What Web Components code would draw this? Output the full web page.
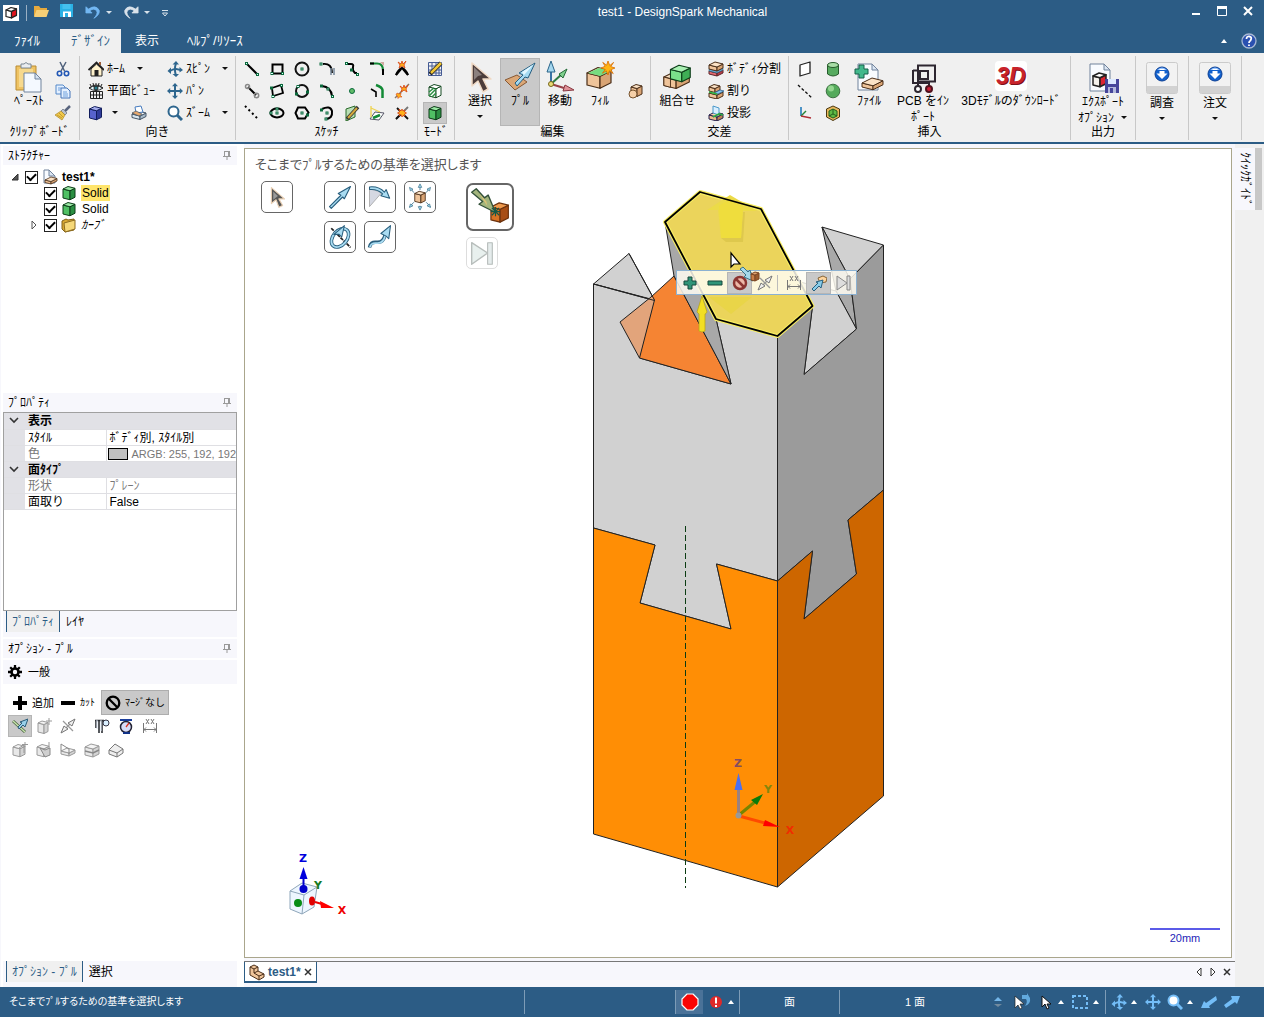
<!DOCTYPE html>
<html lang="ja">
<head>
<meta charset="utf-8">
<title>test1 - DesignSpark Mechanical</title>
<style>
html,body{height:100%;margin:0}
body{font:12px/16px "Liberation Sans","Noto Sans CJK JP",sans-serif;color:#000;background:#f7f7fc;
--blue:#2c5c85;--face:#f0f0f0;--pale:#f7f7fc;--sep:#c8c8c8}
</style>
</head>
<body>
<ds-app></ds-app>
<script>
const pts=a=>a.map(p=>p.join()).join(' ');
const poly=(a,f,s='#333',w=1)=>`<polygon points="${pts(a)}" fill="${f}" stroke="${s}" stroke-width="${w}" stroke-linejoin="round"/>`;
/* A box seen from above: front face, right side and top */
const box=(x,y,w,h,d,f,r,t,s='#333',k=1)=>{const a=w*.25,b=d*.5;return poly([[x,y],[x+w,y+a],[x+w,y+a+h],[x,y+h]],f,s,k)
+poly([[x+w,y+a],[x+w+d,y+a-b],[x+w+d,y+a-b+h],[x+w,y+a+h]],r,s,k)+poly([[x,y],[x+d,y-b],[x+w+d,y+a-b],[x+w,y+a]],t,s,k)};
const ln=(d,c='#000',w=1,e='')=>`<path d="${d}" fill="none" stroke="${c}" stroke-width="${w}" ${e}/>`;
const fl=(d,f,s='none',w=1)=>`<path d="${d}" fill="${f}" stroke="${s}" stroke-width="${w}" stroke-linejoin="round"/>`;
const dot=(...a)=>a.map(([x,y])=>`<rect x="${x-1}" y="${y-1}" width="2" height="2" fill="#dff" stroke="#0a6a3c"/>`).join('');
const cir=(x,y,r,f,s='none',w=1)=>`<circle cx="${x}" cy="${y}" r="${r}" fill="${f}" stroke="${s}" stroke-width="${w}"/>`;
const G=['#4fc064','#2b8f42','#9be8a4','#0c3d18'],B=['#efc49a','#d9a474','#fbe2c6','#4a2e18'],Y=['#e8e8e8','#d4d4d4','#f4f4f4','#9a9a9a'];
const bx=(x,y,w,h,d,c,k=1)=>box(x,y,w,h,d,c[0],c[1],c[2],c[3],k);
const star=(x,y,r)=>fl(`M${x} ${y-r}L${x+r*.25} ${y-r*.35}L${x+r*.8} ${y-r*.8}L${x+r*.4} ${y-r*.2}L${x+r} ${y}L${x+r*.4} ${y+r*.25}L${x+r*.75} ${y+r*.8}L${x+r*.2} ${y+r*.4}L${x} ${y+r}L${x-r*.25} ${y+r*.4}L${x-r*.8} ${y+r*.75}L${x-r*.4} ${y+r*.2}L${x-r} ${y}L${x-r*.4} ${y-r*.25}L${x-r*.75} ${y-r*.8}L${x-r*.2} ${y-r*.4}Z`,'#ffb414','#d96c00',.8);
const spark=(x,y)=>fl(`M${x-4} ${y-3}L${x-1} ${y-1}L${x} ${y-4}L${x+1} ${y-1}L${x+4} ${y-4}L${x+2} ${y}L${x+3} ${y+3}L${x} ${y+1}L${x-3} ${y+3}L${x-2} ${y}Z`,'#ffb21a','#d84315',.8);
const sheet=(x,y,w,h)=>fl(`M${x} ${y}h${w-6}l6 6v${h-6}h${-w}z`,'#f8fbff','#71839c')+fl(`M${x+w-6} ${y}v6h6z`,'#dbe6f3','#71839c');
const arrow4=(c)=>fl('M8 0l3 3.2H9V7h3.800V5L16 8l-3.200 3V9H9v3.800h2L8 16l-3-3.200h2V9H3.200v2L0 8l3.200-3v2H7V3.200H5z',c);
const spin=(c)=>fl('M9 0l3 3.500H9.700Q9 5 9 7l3.500.8V6l3.500 3-3.500 2.500V9.700L9 9q0 2.500.6 4H12l-3 3-3.500-3h2Q7 11 7 9.200Q5 9.500 4 10.500V13L.5 10 4 6.500v2Q5.500 7.500 7 7.300Q7 5 7.700 3.500H5.500z',c);
const lens=(c,f)=>ln('M10 10l5 5',c,3)+cir(6.5,6.5,5,f,c,2);
const I={
app:[16,`<rect width="16" height="16" fill="#fff"/>`+box(3,5,5.5,6.500,5,'#fff','#e0131d','#fff','#222',1.200)],
open:[16,fl('M1 3h5l1.500 2H14v8H1z','#e5a93d')+fl('M3.500 7H16l-2.500 7H1z','#f7cf76')],
save:[16,fl('M1 1h13v13H1z','#2ab1e5')+fl('M3.500 1h8v5h-8z','#44c0ee')+fl('M4 8.500h8V14H4z','#fff')+fl('M6 10h3v4H6z','#2ab1e5')],
undo:[18,fl('M1 2v7h7L5.500 6.500Q10 3 13 6.500Q15 10 10 15Q17 11 16 6Q12-1 4 4.500z','#72b7f2','#72b7f2',.8)],
redo:[18,fl('M17 2v7h-7l2.500-2.500Q8 3 5 6.500Q3 10 8 15Q1 11 2 6Q6-1 14 4.500z','#d9e2ea','#d9e2ea',.8)],
paste:[32,fl('M3 5h20v24H3z','#efc363','#b98b33')+fl('M6 8h14v18H6z','#f6d98e')+fl('M8 3h3q2-3 4 0h3v4H8z','#e9edf1','#7b8894')+fl('M11 12h11l6 6v13H11z','#f4f9ff','#71839c')+fl('M22 12v6h6z','#d4e2f1','#71839c')],
cut:[16,ln('M5 1l4.500 9M11 1L6 10','#50627c',1.500)+cir(4.5,12.500,2.200,'none','#2257b5',1.600)+cir(11.5,12.500,2.200,'none','#2257b5',1.600)],
copy:[16,fl('M1 2h7l2 2v7H1z','#e4f0ff','#5589c9')+fl('M6 5h6l3 3v7H6z','#e4f0ff','#4474b8')+ln('M3 5h3M3 7h2M8 9h4M8 11h5M8 13h5','#6ea0dc')],
brush:[16,ln('M15 1l-5 5','#59657e',2.500)+fl('M8 4l4 4-2 2-4-4z','#b8c0cc','#66707e',.7)+fl('M6 6l4 4-3 5L0 10z','#f1c94a','#a9852a',.7)+ln('M2 10l5 3M4 8l4 4','#b9912a',.8)],
home:[16,fl('M3 8v7h11V8L8.500 3z','#fff2cc','#222')+ln('M.5 9L8.500 1.500 16 9','#222',1.800)+fl('M6.500 9h4v6h-4z','#222')+fl('M11 1h2v3h-2z','#9b5b36')],
plan:[16,ln('M1 5q7-6 14 0M2 1l1 2M5 0l.5 2M8 0v2M11 0l-.5 2M14 1l-1 2','#222')+fl('M1 5q7-4 14 0q-7 5-14 0z','#eafaff','#222')+cir(8,5,2,'#237b8a','#222')+ln('M2.500 8.500h12v7h-12zM5.500 8v8M8.500 8v8M11.500 8v8M2 12h12','#222')],
cube:[16,box(1.500,4,7,9,5,'#5763cc','#303c99','#a4aceb','#111d5c')],
print:[16,bx(1,9,8,3.500,6,['#d9e6ef','#a9bccb','#fff','#456'])+fl('M4 2l6-1 2 6-7 1z','#fff','#467bbf')+fl('M1 8l4-2 6 3-3 2z','#e7a86e','#456',.7)],
spin:[16,spin('#2e668e')],pan:[16,arrow4('#2e668e')],zoom:[16,lens('#2e668e','#fff')],
line:[16,ln('M3 3l10 10','#000',2)+dot([2.5,2.500],[13.5,13.500])],
rect:[16,ln('M3.500 3.500h10v9h-10z','#000',2)+dot([3,12.500],[13.5,12.500])],
circ:[16,cir(8,8,6.500,'none','#111',2)+dot([8,8])],
tan:[16,ln('M4 3q9-1 9 9','#000',1.800)+ln('M12 7v7M15 7v7','#789',1.500)+dot([2,3])],
spl:[16,ln('M3 3h4q3 0 2 3t2 6h2','#000',2)+dot([2.5,2.500],[7.500,9],[13.5,13.500])],
fil:[16,ln('M1 2.500h7q6 0 6 7','#138a36',2.200)+ln('M1 2.500h4M14 8v6','#000',2)+fl('M11 1h4v4z','#cfa9a0')],
trim:[16,ln('M2 14q2-5 6-7 4 2 6 7','#000',2)+spark(8,4)+ln('M2 14l5-6M14 14L9 8','#000',2)],
chain:[16,ln('M4 4l8 8','#000',2)+cir(3.5,3.500,2,'none','#888',1.500)+cir(12.5,12.500,2.200,'none','#888',1.500)],
rect3:[16,ln('M3 5l9-3 2 8-10 3z','#000',1.800)+dot([2.500,5],[12.5,2.500],[4,13.500])],
circ3:[16,cir(8,8,6,'none','#111',2)+dot([4,3.500],[2.500,11],[13.5,9])],
arc:[16,ln('M3 3q9 1 10 10','#000',2)+dot([2.500,3],[9,6],[13.5,13.500])],
pt:[16,cir(8,8,2.500,'#62bc69','#0a6a3c')],
off:[16,ln('M7 2q6 2 6.500 5v8','#138a36',2.500)+ln('M2 6l5 3v5','#000',1.600)],
ext:[16,ln('M1 15L15 1','#876',1.500)+spark(10,6)+fl('M3 10l2 1 2-1-.5 2.500L8 14l-2.500 0L4 15.500 3.500 13 2 12z','#ffb21a','#d84315',.6)],
cline:[16,ln('M1 1l14 14','#000',2,'stroke-dasharray="2 3"')],
ell:[16,`<ellipse cx="8" cy="8" rx="6.500" ry="4.500" fill="none" stroke="#000" stroke-width="2"/>`+dot([8,4],[8,8],[2,8])],
polyg:[16,ln('M4 2.500h7l3.500 5L11 13.500H4L1.500 8z','#000',2)+dot([8,8],[13.500,10])],
sweep:[16,ln('M3 4q8-4 10 2 1 8-7 8','#000',2)+dot([2.500,5],[8,8],[7,14])],
skp:[16,fl('M2 4l9-3v11l-9 4z','#b9dfb5','#2b6b2b')+ln('M3 14L14 2','#333',3.500)+ln('M4 13L13 3','#d4a93c',2)],
proj:[16,fl('M1 14l5-7 9 1-5 7z','#fff','#556')+ln('M4 13l7-3','#138a36',2.500)+ln('M2 1v11M2 3l9 4','#eed34e',1.300)],
split:[16,ln('M2 14L14 2','#777',1.800)+ln('M3 3l11 11M2 14l6-6','#111',1.800)+fl('M5 4l2 2 1-2 1 2 2-1-.5 2 2 1-2 1 .5 2-2-.5L8 12 7 9.500 5 11l.5-2-2-1 2-1z','#ffb21a','#d84315',.8)],
mgrid:[16,ln('M1.500 1.500h13v13h-13zM5 1v14M9 1v14M12 1v14M1 5h14M1 9h14M1 12h14','#445b94',1)+ln('M3 13L14 2','#222',4)+ln('M4 12L14 2','#f0c534',2.500)],
msec:[16,box(2,4,7,9,5,'#fff','#fff','#fff','#174a22')+ln('M2 9l5-4M2 13l7-7M5 14l4-4','#2b8f42',1.500)],
solid:[16,bx(2,4,7,9,5,G)],
select:[32,fl('M8 2v23l6-5 5 11 5-3-5-10h8z','#4b3c3a','#f0d9c4',1.500)+fl('M10 6v13l4-4 4-1z','#8b807e')],
pull:[32,fl('M1 19l12-5 10 7-12 8z','#dba776','#875833')+fl('M11 22l8-8-4-2L31 2l-7 15-3-1-8 9z','#a5daf1','#265e81')+fl('M18 11L30 3 20 14z','#e4f7ff')],
move:[32,ln('M7 22V8','#3a73a6',2)+fl('M7 0l4 11H3z','#a5d7ef','#2b6489')+ln('M7 23l11-10','#2d7b43',2)+fl('M23 8l-4 9-4-4z','#7fd08d','#246938')+ln('M7 23l13 4','#994148',2)+fl('M30 29l-11 1 2-6z','#df9298','#893841')+cir(7,23,2.500,'#e9da76','#78661c')],
fill:[32,bx(3,12,13,12,11,B,1.200)+fl('M4 12l11-5 12 3-11 5z','#77dc80')+star(24,7,7)],
blend:[16,bx(3,4,6,8,5,B)+cir(5,11,4,'#f5cfa7','#76532e')],
comb:[34,bx(2,17,13,9,14,B,1.200)+bx(9,9,12,10,9,['#7be08a','#3fae55','#a9f0b2','#0c3d18'],1.200)+fl('M2 17l7 2v9l-7-2z',B[0],B[3])],
bsplit:[16,bx(1,10,8,3,6,['#e4696f','#b73c45','#f5abad','#5e262a'])+fl('M1 8l8 2 6-3v2l-6 3-8-2z','#67b1de','#31556e',.6)+bx(1,4,8,4,6,B)],
fsplit:[16,bx(1,10,8,4,6,B)+bx(1,4,6,4,5,B)+fl('M6 10l6-3 4 1-6 3z','#87c6f2','#2c608b',.8)+ln('M1 9l8 2','#2eb545',1.500)],
project:[16,bx(1,10,8,4,6,['#edb98b','#bb804f','#f4d0ad','#26204f'])+fl('M5 1l6 2v7l-6-2z','#d9efff','#4a98c9')+ln('M5 12l6-3 4 1','#28a945',1.800)],
plane:[16,fl('M3 4l10-3v11L3 15z','#fff','#222',1.300)],
axis:[16,ln('M1 2l14 13','#111',1.300,'stroke-dasharray="3 2"')],
csys:[16,ln('M4 2v9','#1674b8',1.500)+ln('M4 11l5-5','#258339',1.500)+ln('M4 11l10 2','#af2c33',1.500)],
cyl:[16,fl('M2.500 4v9q5.500 4 11 0V4z','#57ab60','#285c2d')+`<ellipse cx="8" cy="4" rx="5.500" ry="2.500" fill="#a9dda7" stroke="#285c2d"/>`],
sph:[16,cir(8,8,6.800,'#54aa5b','#3d7142')+cir(6,5.500,3,'#93d58f')],
shell:[16,fl('M1.500 4L8 1l6.500 3v8L8 15.500 1.500 12z','#e6b75b','#4b3710')+fl('M4 6l4-2 4 2v5l-4 2-4-2z','#5fbb44','#245e1c')+ln('M8 4v5l4 2M8 9l-4 2','#245e1c')],
file:[32,sheet(5,3,20,26)+fl('M6 4h5v4h4v5h-4v4H6v-4H2V8h4z','#42b88c','#16604a')+bx(9,22,11,4,10,B)],
pcb:[32,ln('M11 4.500h17v16H11zM6 9.500h5M6 9v13h17M13 10h8v8h-8z','#2d2630',2)+ln('M11 22v3M22 22v3','#2d2630',2)+cir(11,28,3,'#fff','#2d2630',2)+cir(22,28,3,'#ca2137','#51111c',2)],
exp:[32,sheet(3,2,20,27)+box(6,14,7,9,6,'#f4f1ec','#db2432','#fff','#222',1.500)+fl('M18 17h14v14H18z','#45459a')+fl('M21 17h8v5h-8z','#dce9ff')+fl('M21 25h8v6h-8z','#b3b9dc')+fl('M23 26h3v5h-3z','#45459a')],
down:[34,`<rect x="1.500" y="1.500" width="31" height="31" rx="2" fill="#f2f2f2" stroke="#cbcbcb"/><rect x="2" y="25" width="30" height="7" fill="#d2d2d2"/>`+cir(17,13,7,'#1261cd','#0b3f94')+fl('M12 9q5-5 10 0z','#94c2ff')+fl('M14.500 8h5v4.500h3L17 18l-5.500-5.500h3z','#fff')+ln('M14 9.500h6','#1261cd')],
doc:[16,sheet(2,1,11,13)+bx(3,11,6,2.500,6,B,.8)],
folder:[16,fl('M1 4l4-2 2 1 6-1v11l-9 2-3-3z','#d9a932','#806018')+fl('M3 6l11-3v9L4 15z','#f6d878','#8f6d20')],
gear:[16,cir(8,8,4,'none','#000',3)+ln('M8 0v4M8 12v4M0 8h4M12 8h4M2.500 2.500l3 3M10.500 10.500l3 3M13.500 2.500l-3 3M5.500 10.500l-3 3','#000',2.600)],
plus:[16,fl('M6 1h4v5h5v4h-5v5H6v-5H1V6h5z','#000')],minus:[16,fl('M1 6h14v4H1z','#000')],
no:[16,cir(8,8,6.300,'none','#000',2.300)+ln('M3.500 3.500l9 9','#000',2.300)],
p1:[16,ln('M1 3l12 11','#47613f',3)+ln('M1 3l12 11','#c8e5ad',1.500)+fl('M6 9l4-4-2-1 8-3-3 8-2-2-4 4z','#99d0ea','#285b79')],
g1:[16,bx(2,5,6,9,4,Y)+ln('M13 0v7M10 3h6','#999')],
g2:[16,ln('M2 14L14 2M3 3l10 10','#999',1.300)+fl('M15 1l-7 4 4 3zM1 15l7-4-4-3z','#eee','#777')],
cal:[16,ln('M2 2v8M5 2v13M8 2v13M1 2.500h9','#2c3035',1.600)+ln('M3 2v9M7 2v11','#dbe4f2')+cir(12,5,3,'#d9efff','#334')],
gauge:[16,fl('M2 1h12v2H2z','#183c9b')+cir(8,9,5.500,'#d7dcf8','#223',1.500)+ln('M8 9l3-4','#d32',1.300)+ln('M5 15h7','#138',2)],
dim:[16,ln('M1.500 5v10M14.500 5v10M2 11.500h12M4 9.500l-2 2 2 2M12 9.500l2 2-2 2M4 1l3 5M7 1L4 6M9 1l3 5M12 1L9 6','#777')],
g3:[16,bx(1,5,7,8,5,Y)+ln('M7 6l5-3v8M13 0v5M10 2.500h6','#999')],g4:[16,bx(1,5,7,8,5,Y)+fl('M4 6l5 2 5-2v7l-5 2z','#cfcfcf','#888')+ln('M13 0v5','#999')],
g5:[16,bx(1,9,8,3,6,Y)+ln('M1 9V2l8 5v5','#888')],g6:[16,bx(1,5,8,8,6,Y)+ln('M1 9l8 2 6-3','#888',1.500)],g7:[16,fl('M1 8l6-6 8 5v4l-6 4-8-3z','#eee','#777')+ln('M1 8l8 3 6-4M9 11v4','#777')],
vsel:[32,fl('M10 6v17l5-4 3 8 4-2-4-7h6z','#555','#e7ceb3',1.200)+fl('M12 10v9l5-4z','#999')],
v1:[32,fl('M4 27L17 14l-3-2L28 4l-7 14-2-2L6 29z','#a9dcf2','#285e7d',1.300)],
v2:[32,fl('M4 27V6l14 5z','#d5d8e2','#aaa')+fl('M4 4.500q11-1 17 6l2-3 4 10-10-3 2-2q-6-6-15-5z','#a9dcf2','#285e7d',1.200)],
v3:[32,bx(10,12,7,9,5,B)+ln('M16 8V3M16 26v3M9 11L5 6M23 11l4-5M9 22l-5 5M23 22l5 5','#3a718b',1)+fl('M16 1l2 4h-4zM16 31l2-4h-4zM4 5l4 2-3 2zM28 5l-4 2 3 2zM4 28l4-2-3-2zM28 28l-4-2 3-2z','#a9dcf2','#3a718b',.8)],
v4:[32,ln('M6 6l22 22','#222',2,'stroke-dasharray="4 1"')+`<ellipse cx="16" cy="17" rx="8" ry="12" transform="rotate(40 16 17)" fill="none" stroke="#285e7d" stroke-width="4"/><ellipse cx="16" cy="17" rx="8" ry="12" transform="rotate(40 16 17)" fill="none" stroke="#a9dcf2" stroke-width="2"/>`+fl('M9 13l12-10-3 13-3-3z','#a9dcf2','#285e7d',1.200)],
v5:[32,ln('M4 28q1-7 8-6 8 1 10-9','#285e7d',4)+ln('M4.500 27.500q1-5 7.500-4.500 8 1 10-9','#a9dcf2',2)+fl('M17 12L28 3l-2 15-3-3z','#a9dcf2','#285e7d',1.200)],
upto:[48,bx(25,24,10,14,9,['#d97325','#a84e16','#ef9a4d','#6b310c'],1.300)+fl('M4 8l5-4 9 10 4-3 8 19-18-9 4-3z','#a3b57d','#33513a',1.500)+fl('M12 9l8 9 1 5z','#dfc375')+ln('M30 24v10M25 29h10M26 25l8 8M34 25l-8 8','#155847',1.300)],
skip:[32,fl('M5 5l17 11L5 28z','#e8f0ee','#b7bdbb',1.500)+fl('M22 5h5v23h-5z','#e5ecec','#b7bdbb',1.200)],
mp:[16,fl('M6 2h4v4h4v4h-4v4H6v-4H2V6h4z','#2f9478','#17493c')],mm:[16,fl('M1 6h14v4H1z','#2f9478','#17493c')],
mno:[16,cir(8,8,6,'#edb8a8','#8c3532',2.500)+ln('M4 4l8 8','#8c3532',2.500)],
upf:[16,fl('M7 3l5-2 4 2-1 4-6 1z','#ffd59e','#876538')+fl('M1 14l6-6-2-1 7-2-2 8-2-2-5 5z','#88cce9','#275f7e')],
mskip:[16,fl('M1 1l10 7-10 7z','#ddd','#888')+fl('M11 1h3v14h-3z','#ddd','#888')],
rec:[18,fl('M6 1h6l5 5v6l-5 5H6l-5-5V6z','#fa0505','#fff',1.200)],
err:[16,cir(8,8,6,'#df2929')+ln('M8 3.500v6M8 11v2','#fff',2)],
upd:[10,fl('M5 0l4 4H1z','#73b5e8')+fl('M1 7h8l-4 3z','#718a9e')],
sback:[18,fl('M2 3v12l3-3 2 4 2-1-2-4h4z','#fff','#222',.7)+fl('M9 2h5V0l3 5q1 6-5 8 3-4 1-7H9z','#62a9dd')],
scur:[16,fl('M4 2v11l3-3 2 5 2-1-2-4h4z','#fff','#111',1)],
sbox:[18,ln('M2 3h14v12H2z','#73bdf7',2,'stroke-dasharray="3 2"')],
sspin:[16,spin('#73bdf7')],span:[16,arrow4('#73bdf7')],szoom:[16,lens('#73bdf7','#fff')],
sdl:[16,fl('M0 14l3-7 2 2L15 2l1 4-8 6 1 2z','#73bdf7')],sur:[16,fl('M16 2l-3 8-2-2-9 6-2-3 8-6-1-3z','#73bdf7')],
pin:[10,ln('M2.500 1v5M7.500 1v5M2 1.500h6M1 6.500h8M5 7v3','#999')+ln('M6.500 1v5','#999')],
help:[16,cir(8,8,7,'#2a50b0','#a8b8d4',1.300)+ln('M5.500 6q0-3 3-2.500t1 4Q8 8.500 8 10M8 11.500v1.500','#fff',1.800)],
min:[12,fl('M2 8h8v2H2z','#fff')],max:[12,ln('M1.500 1.500h9v9h-9z','#fff')+fl('M1 1h10v3H1z','#fff')],close:[12,ln('M2 2l8 8M10 2l-8 8','#fff',2)],
x:[10,ln('M2 2l6 6M8 2L2 8','#333',1.500)],lt:[10,fl('M7 1v8L3 5z','#fff','#333')],rt:[10,fl('M3 1v8l4-4z','#fff','#333')],
chev:[10,ln('M1 3l4 4 4-4','#333',1.600)],
treeo:[10,fl('M8 2v6H2z','#555','#333')],treec:[10,fl('M3 1l4 4-4 4z','#fff','#555')],
part:[18,fl('M2 4l4-2 4 2v4l6 3v3l-5 3-9-5z','#efc49a','#4a2e18')+ln('M2 4l4 2 4-2M6 6v4l5 3 5-2M11 13v4M6 10l4-2','#4a2e18')],
caret:[8,fl('M1 2h6L4 5z','#111')],wcaret:[8,fl('M1 2h6L4 5z','#d8e2ea')],up:[8,fl('M1 6h6L4 2z','#fff')],qat:[8,ln('M1 1.500h6','#d8e2ea')+fl('M1.500 4h5L4 7z','none','#d8e2ea')]
};
const define=(name,css,html)=>customElements.define(name,class extends HTMLElement{
 connectedCallback(){if(this.shadowRoot)return;const r=this.attachShadow({mode:'open'});
 r.innerHTML=`<style>*{box-sizing:border-box}button{font:inherit;color:inherit;background:none;border:0;padding:0;margin:0}${css}</style>`+(typeof html=='function'?html(this):html);}
});
const ic=(n,s)=>`<ds-icon name="${n}"${s?` size="${s}"`:''}></ds-icon>`;
const tool=(icon,label,mode='small',extra='')=>`<ds-tool icon="${icon}" label="${label}" mode="${mode}" ${extra}></ds-tool>`;
const only=(icon,label,extra='')=>tool(icon,label,'icon',extra);

define('ds-icon',`:host{display:inline-flex;flex:none}svg{display:block}`,e=>{
 const [v,s]=I[e.getAttribute('name')],z=e.getAttribute('size')||v;return `<svg width="${z}" height="${z}" viewBox="0 0 ${v} ${v}" aria-hidden="true">${s}</svg>`});

define('ds-tool',`:host{display:flex}button{display:flex;align-items:center;flex:1;white-space:nowrap;line-height:16px}
.small{gap:3px;height:22px}.small ds-icon:last-child:not(:first-child){margin-left:8px}
.icon{justify-content:center;gap:7px;height:22px;min-width:16px}
.large{flex-direction:column;justify-content:flex-start;padding-top:3px;height:68px;text-align:center}
.large ds-icon:last-child:not(:first-child){margin-top:4px}
:host([on]) button{background:#c9c9c9;box-shadow:inset 0 0 0 1px #b5b5b5}`,e=>{
 const a=n=>e.getAttribute(n),m=a('mode'),L=a('label')||'',menu=e.hasAttribute('menu')?ic(a('menu')||'caret'):'';
 const text=m=='icon'?'':`<span>${L.replace('|','<br>')}</span>`;
 return `<button class="${m}" ${m=='icon'?`aria-label="${L}"`:''}>${ic(a('icon'),a('size'))}${text}${menu}</button>`});

define('ds-title',`:host{display:flex;align-items:center;height:28px;padding:0 10px 2px 3px;background:var(--blue);color:#fff}
.l,.r{flex:1;display:flex;align-items:center}.l{gap:10px}.r{justify-content:flex-end;gap:14px}.bar{width:1px;height:16px;background:#9ab0c4;margin:0 -4px 0 -3px}
.g{display:flex;align-items:center;gap:4px}.t{margin-left:108px;padding-bottom:2px}`,
`<div class="l">${ic('app')}<i class="bar"></i><button aria-label="開く">${ic('open')}</button><button aria-label="保存">${ic('save')}</button><button class="g" aria-label="元に戻す">${ic('undo',16)}${ic('wcaret')}</button><button class="g" aria-label="やり直し">${ic('redo',16)}${ic('wcaret')}</button><button aria-label="カスタマイズ">${ic('qat')}</button></div>
<span class="t">test1 - DesignSpark Mechanical</span><div class="r"><button aria-label="最小化">${ic('min')}</button><button aria-label="最大化">${ic('max')}</button><button aria-label="閉じる">${ic('close')}</button></div>`);

define('ds-tabs',`:host{display:flex;height:25px;background:var(--blue);color:#fff;padding-right:7px;align-items:flex-end;font-size:13px}
button{height:24px;padding:0 14px;line-height:24px}.on{background:var(--face);color:var(--blue);padding:0 11px;margin-left:6px}.v{padding:0 14px;font-size:12px}.sp{flex:1}.i{padding:0 0 0 13px;align-self:center;display:flex;align-items:center}`,
`<button>ﾌｧｲﾙ</button><button class="on">ﾃﾞｻﾞｲﾝ</button><button class="v">表示</button><button>ﾍﾙﾌﾟ/ﾘｿｰｽ</button><span class="sp"></span><button class="i" aria-label="リボンを折りたたむ">${ic('up')}</button><button class="i" aria-label="ヘルプ">${ic('help')}</button>`);

define('ds-group',`:host{display:flex;flex-direction:column;border-right:1px solid var(--sep);height:84px;flex:none;width:var(--w)}
.b{display:flex;height:68px;padding:2px 0 0 var(--p,0)}.n{text-align:center;line-height:17px}`,
e=>`<div class="b"><slot></slot></div><div class="n">${e.getAttribute('label')||''}</div>`);

const sk=['line','rect','circ','tan','spl','fil','trim','chain','rect3','circ3','arc','pt','off','ext','cline','ell','polyg','sweep','skp','proj','split'];
define('ds-ribbon',`:host{display:flex;background:var(--face);border-bottom:2px solid var(--blue);height:91px;padding-top:3px}
.c{display:flex;flex-direction:column}.h{display:flex;gap:12px}.s{display:grid;grid-template-columns:repeat(7,25px);grid-auto-rows:22px}
.o{display:grid;grid-template-columns:79px 70px;grid-auto-rows:22px}.m{padding-left:5px}.m ds-tool{width:24px}
.w40{width:40px}.w28{width:28px}.w53{width:53px}.w44{width:44px}.w64{width:64px}.end{align-self:center;padding-left:3px}
.three{display:flex;flex-direction:column;align-items:center;padding-top:3px;width:112px}.three b{font:italic 900 23px/30px "Liberation Sans",sans-serif;color:#c8232b;background:#fff;border-radius:4px;width:32px;margin-bottom:2px;display:flex;justify-content:center;text-shadow:1px 1px #7c1018}
.ex{display:flex;flex-direction:column;align-items:center;width:64px;padding-top:4px;line-height:16px}.ex .r{display:flex;align-items:center;gap:6px}`,
`<ds-group label="ｸﾘｯﾌﾟﾎﾞｰﾄﾞ" style="--w:80px;--p:7px">${tool('paste','ﾍﾟｰｽﾄ','large','class="w44"')}<div class="c" style="padding-left:4px">${only('cut','切り取り')}${only('copy','コピー')}${only('brush','書式')}</div></ds-group>
<ds-group label="向き" style="--w:156px;--p:8px"><div class="o">${tool('home','ﾎｰﾑ','small','menu')}${tool('spin','ｽﾋﾟﾝ','small','menu')}${tool('plan','平面ﾋﾞｭｰ')}${tool('pan','ﾊﾟﾝ')}<div class="h">${only('cube','表示方向','menu')}${only('print','印刷')}</div>${tool('zoom','ｽﾞｰﾑ','small','menu')}</div></ds-group>
<ds-group label="ｽｹｯﾁ" style="--w:182px;--p:3px"><div class="s">${sk.map(n=>only(n,n)).join('')}</div></ds-group>
<ds-group label="ﾓｰﾄﾞ" style="--w:37px"><div class="c m">${only('mgrid','スケッチモード')}${only('msec','断面モード')}${only('solid','3Dモード','on')}</div></ds-group>
<ds-group label="編集" style="--w:196px;--p:5px">${tool('select','選択','large','menu class="w40"')}${tool('pull','ﾌﾟﾙ','large','on class="w40"')}${tool('move','移動','large','class="w40"')}${tool('fill','ﾌｨﾙ','large','class="w40"')}${only('blend','ブレンド','class="w28 end"')}</ds-group>
<ds-group label="交差" style="--w:138px">${tool('comb','組合せ','large','size="32" class="w53"')}<div class="c" style="padding-left:4px">${tool('bsplit','ﾎﾞﾃﾞｨ分割')}${tool('fsplit','割り')}${tool('project','投影')}</div></ds-group>
<ds-group label="挿入" style="--w:282px;--p:2px"><div class="c w28">${only('plane','平面')}${only('axis','軸')}${only('csys','原点')}</div><div class="c w28">${only('cyl','円柱')}${only('sph','球')}${only('shell','シェル')}</div>${tool('file','ﾌｧｲﾙ','large','class="w44"')}${tool('pcb','PCB をｲﾝ|ﾎﾟｰﾄ','large','class="w64"')}<button class="three"><b>3D</b><span>3Dﾓﾃﾞﾙのﾀﾞｳﾝﾛｰﾄﾞ</span></button></ds-group>
<ds-group label="出力" style="--w:65px"><button class="ex">${ic('exp',32)}<span>ｴｸｽﾎﾟｰﾄ</span><span class="r">ｵﾌﾟｼｮﾝ ${ic('caret')}</span></button></ds-group>
<ds-group style="--w:53px">${tool('down','調査','large','menu class="w53"')}</ds-group><ds-group style="--w:53px">${tool('down','注文','large','menu class="w53"')}</ds-group>`);

define('ds-panel',`:host{display:flex;flex-direction:column;min-height:0;padding:2px 7px 0 2px}
header{display:flex;align-items:center;justify-content:space-between;background:var(--pale);height:19px;flex:none;padding:0 5px}.b{background:#fff;flex:1;min-height:0;display:flex;flex-direction:column}
nav{display:flex;height:26px;flex:none;background:var(--pale);padding-left:3px}nav button{height:21px;padding:0 6px}nav .on{color:var(--blue);border:solid var(--blue);border-width:0 1px;padding:0 5px;background:var(--face)}`,
e=>`<header><span>${e.getAttribute('label')}</span><button aria-label="固定">${ic('pin')}</button></header><div class="b"><slot></slot></div>`+(e.hasAttribute('tabs')?`<nav>${e.getAttribute('tabs').split(',').map((t,i)=>`<button class="${i?'':'on'}">${t}</button>`).join('')}</nav>`:''));

define('ds-tree',`:host{display:flex;flex-direction:column;padding:4px 0 0 7px}.r{display:flex;align-items:center;height:16px;gap:5px}.k{padding-left:19px}
label{display:flex;align-items:center;gap:4px;height:16px}input{appearance:none;width:13px;height:13px;margin:0;border:1px solid #222;background:#fff;display:grid;place-items:center}
input:checked::before{content:"";width:7px;height:4px;border:solid #000;border-width:0 0 2px 2px;transform:rotate(-45deg);margin-bottom:3px}.g{width:10px}.hl{background:#ffe56c}span{padding:0 1px}`,
`<div class="r">${ic('treeo')}<label><input type="checkbox" checked>${ic('doc')}<b>test1*</b></label></div>
<div class="r k"><i class="g"></i><label><input type="checkbox" checked>${ic('solid')}<span class="hl">Solid</span></label></div>
<div class="r k"><i class="g"></i><label><input type="checkbox" checked>${ic('solid')}<span>Solid</span></label></div>
<div class="r k">${ic('treec')}<label><input type="checkbox" checked>${ic('folder')}<i>ｶｰﾌﾞ</i></label></div>`);

define('ds-props',`:host{display:block;flex:1;border:1px solid #a0a0a0;overflow:hidden}table{border-collapse:collapse;width:100%;table-layout:fixed}
tr{height:16px}td,th{padding:1px 0 0 3px;line-height:14px;height:16px;border-bottom:1px solid #dfdfe3;text-align:left;white-space:nowrap;font-weight:400}
.a{width:21px;background:#e1e1e6;padding-left:5px}.k{width:81px;border-right:1px solid #dfdfe3}.h th{background:#e1e1e6;font-weight:700}.d{color:#777}.d .v{font-size:11px;padding-left:1px}.sw{display:inline-block;width:20px;height:12px;background:#c0c0c0;border:1px solid #000;vertical-align:-2px;margin-right:4px}`,
`<table><colgroup><col class="a"><col class="k"><col></colgroup><tr class="h"><td class="a">${ic('chev')}</td><th colspan="2">表示</th></tr><tr><td class="a"></td><th class="k">ｽﾀｲﾙ</th><td>ﾎﾞﾃﾞｨ別, ｽﾀｲﾙ別</td></tr><tr class="d"><td class="a"></td><th class="k">色</th><td class="v"><i class="sw"></i>ARGB: 255, 192, 192</td></tr>
<tr class="h"><td class="a">${ic('chev')}</td><th colspan="2">面ﾀｲﾌﾟ</th></tr><tr class="d"><td class="a"></td><th class="k">形状</th><td>ﾌﾟﾚｰﾝ</td></tr><tr><td class="a"></td><th class="k">面取り</th><td>False</td></tr></table>`);

define('ds-options',`:host{display:flex;flex-direction:column}.g{display:flex;align-items:center;gap:6px;height:26px;background:var(--pale);padding-left:5px;font-size:11px;margin-bottom:6px;border-top:2px solid #fff}
.r{display:flex;height:24px;padding-left:5px}.r ds-tool{min-width:24px}.t{height:25px;gap:6px;padding-left:9px;font-size:11px}button{display:flex;align-items:center;gap:4px}button.k{font-size:10px}button.on{background:#c9c9c9;box-shadow:inset 0 0 0 1px #adadad;padding:0 4px;font-size:10px}.sp{width:10px}`,
`<div class="g">${ic('gear',14)}<span>一般</span></div><div class="r t"><button>${ic('plus')}追加</button><button class="k">${ic('minus')}ｶｯﾄ</button><button class="on">${ic('no')}ﾏｰｼﾞなし</button></div>
<div class="r">${only('p1','方向','on')}${only('g1','面取り')}${only('g2','両側')}<i class="sp"></i>${only('cal','測定')}${only('gauge','ゲージ')}${only('dim','寸法')}</div>
<div class="r">${only('g3','丸み')}${only('g4','面取り')}${only('g5','押し出し')}${only('g6','コピー')}${only('g7','回転')}</div>`);

const E=(a,f)=>`<polygon points="${a}" fill="${f}" stroke="#222" stroke-width="1" stroke-linejoin="round"/>`;
define('ds-scene',`:host{display:block}svg{display:block;width:100%;height:100%}text{font:700 11px "DejaVu Sans",sans-serif;text-anchor:middle}.mm{font:11px "Liberation Sans",sans-serif}`,
`<svg viewBox="245 150 986 806" role="img" aria-label="モデル">
${E('822,227 883.500,245 850,279','#d1d1d1')}${E('822,227 850,279 856.500,329 836,291','#a9a9a9')}${E('800,282 836,291 856.500,329 804,374.500 812.500,306','#d1d1d1')}
${E('883.500,245 883.500,490 848,520 856.500,574 804,619 812.500,551 777.500,581 777.500,336 812.500,306 804,374.500 856.500,329 850,279','#9b9b9b')}
${E('593.500,284 629,253.500 654.500,300','#d1d1d1')}
${E('593.500,284 654.500,300.500 639.500,358 731,384 716,319 777.500,336 777.500,581 716.500,564 731,629 640,603 655,545 593.500,528','#d1d1d1')}
<path d="M651 297L674 276 731 384 639.500 358 654.500 300z" fill="#f58433"/><path d="M620 322L651 297 654.500 300 639.500 358z" fill="#e2a47b"/>
<path d="M651 297L674 276 731 384 639.500 358 654.500 300 629 253.500M651 297L620 322 639.500 358M593.500 284L654.500 300.500" fill="none" stroke="#222"/>
${E('665,222 716,319 731,384 674,276','#a8a8a8')}
${E('593.500,528 655,545 640,603 731,629 716.500,564 777.500,581 777.500,887 593.500,834','#ff8e05')}
${E('777.500,581 812.500,551 804,619 856.500,574 848,520 883.500,490 883.500,796 777.500,887','#cd6600')}
<path d="M685.500 526V888" stroke="#0b3c12" stroke-dasharray="6 3"/>
<g stroke-linejoin="round"><path d="M700 192L761 209 812.500 306 777.500 336 716 319 665 222z" fill="#ebd45b" stroke="#f8ee63" stroke-width="4"/>
<path d="M722 212h23l-2 30h-17l-5-4z" fill="#dec84d"/><path d="M707 210L730 195 757 211H743L741 238H721L718 210z" fill="#ecdb48"/><path d="M719 206l11-7 13 8-2 31H721z" fill="#efdd3d"/><path d="M709 297h43l-21 17z" fill="#e9d548"/>
<path d="M700 192L761 209 812.500 306 777.500 336 716 319 665 222z" fill="none" stroke="#000" stroke-width="1.800"/></g>
<path d="M697 312l5-16 5 16q-1 2-2 2v17q-3 2-6 0v-17z" fill="#f2de23" stroke="#b9a51b" stroke-width=".8"/>
<g stroke-width="3"><path d="M739 815l17-14" stroke="#778500"/><path d="M738.500 815V787" stroke="#99817e"/><path d="M739 816l26 7" stroke="#ff4a00"/></g>
<path d="M738.500 773l4 17h-8z" fill="#4b70f0"/><path d="M763 794l-6 11-6-5z" fill="#087b0a"/><path d="M780 827l-17-1 2-6z" fill="#f00"/><circle cx="738.500" cy="815.500" r="3" fill="#999"/>
<text x="738" y="767" fill="#844d60">Z</text><text x="768" y="793" fill="#85860c">Y</text><text x="790" y="834" fill="#f02d00">X</text>
<g stroke="#8fa6ba"><path d="M290 891l12-8 15 4-3 20-12 7-12-5z" fill="#edf6ff"/><path d="M290 891l14 4 13-8M304 895l-2 19" fill="none"/></g>
<path d="M303.500 890v-12" stroke="#00c" stroke-width="2"/><path d="M303.500 867l4 12h-8z" fill="#00d"/><circle cx="303.500" cy="889" r="4" fill="#00c"/><circle cx="298" cy="903" r="4" fill="#078d16"/><ellipse cx="312" cy="901" rx="3" ry="4.500" fill="#e00000"/><path d="M315 902l7 2" stroke="#e00" stroke-width="2"/><path d="M320 901l14 7-13 0z" fill="#f00"/>
<text x="303" y="862" fill="#00d">Z</text><text x="318" y="889" fill="#157a23">Y</text><text x="342" y="914" fill="#e00">X</text>
<path d="M1150 929h70" stroke="#2525e0" stroke-width="1.500"/><text class="mm" x="1185" y="942" fill="#2525b8">20mm</text></svg>`);

define('ds-mini',`:host{display:flex;align-items:center;height:25px;background:#fffdf3d8;border:1px solid #8bb1d2}ds-tool{width:25px}.s{width:1px;height:16px;background:#bbb;margin-right:3px}`,
`${only('mp','追加')}${only('mm','カット')}${only('mno','マージなし','on')}${only('g2','両側')}<i class="s"></i>${only('dim','寸法')}${only('upf','基準まで','on')}${only('mskip','完了')}`);

define('ds-view',`:host{display:block;position:relative;flex:1;min-height:0;background:#fff;border:1px solid #aaa68c;overflow:hidden}
ds-scene{position:absolute;inset:0}.ui{position:relative;padding:7px 10px}.msg{font-size:13px;line-height:18px;color:#555;font-feature-settings:"palt"}
.row{display:flex;align-items:flex-start;padding:7px 0 0 6px}.row button{width:32px;height:32px;border:1px solid #666;border-radius:5px;background:#fff;display:grid;place-items:center}
.g{display:grid;grid-template-columns:repeat(3,32px);gap:8px;margin:0 30px 0 31px}.u{display:flex;flex-direction:column;gap:6px;padding-top:2px}.row .big{width:48px;height:48px;border-radius:7px;border-width:2px}.row .dim{border-color:#ddd}
ds-mini{position:absolute;left:431px;top:121px}.cur{position:absolute;left:484px;top:102px}`,
`<ds-scene></ds-scene><div class="ui"><div class="msg">そこまでﾌﾟﾙするための基準を選択します</div><div class="row"><button aria-label="選択">${ic('vsel',30)}</button><div class="g">${['v1','v2','v3','v4','v5'].map(n=>`<button aria-label="${n}">${ic(n,28)}</button>`).join('')}</div><div class="u"><button class="big" aria-label="基準まで">${ic('upto',44)}</button><button class="dim" aria-label="完了">${ic('skip',30)}</button></div></div></div>
<ds-mini></ds-mini><svg class="cur" width="32" height="36" viewBox="0 0 32 36"><path d="M2 2v14l3-3h6z" fill="#fff" stroke="#000" stroke-width="1.200"/><path d="M11 18l3-2 5 5 2-2 3 11-9-4 2-2z" fill="#a5d8ea" stroke="#397386"/>${bx(22,23,4,6,4,['#c87f48','#9a5a2d','#e0a26f','#7b4524'])}</svg>`);

define('ds-docs',`:host{display:flex;align-items:flex-start;height:26px;border-top:1px solid #777;margin-top:3px;background:var(--pale);padding-right:1px}.t{display:flex;align-items:center;gap:2px;height:21px;border:solid var(--blue);border-width:0 1px 2px;background:#fff;padding:0 3px;color:var(--blue);font-weight:700}.sp{flex:1}.n{height:20px;width:14px;display:grid;place-items:center}`,
`<button class="t">${ic('part')}test1*${ic('x')}</button><span class="sp"></span><button class="n" aria-label="前へ">${ic('lt')}</button><button class="n" aria-label="次へ">${ic('rt')}</button><button class="n" aria-label="閉じる">${ic('x')}</button>`);

define('ds-status',`:host{display:flex;height:30px;background:var(--blue);color:#fff;font-size:11px;align-items:center;flex:none}
div{display:flex;align-items:center;justify-content:center;height:24px;border-right:1px solid #7d9cb7}.m{flex:1;justify-content:flex-start;padding-left:9px;font-size:10px;font-feature-settings:"palt"}.e{width:151px}.i{width:64px;justify-content:flex-start;gap:5px}.i ds-tool{background:#4a7298;width:27px;height:24px;align-items:center}.f{width:100px}.o{width:150px;border:0}.k{width:274px;border:0;justify-content:space-between;padding-right:24px}.k span{width:1px;height:24px;background:#7d9cb7;margin:0 -2px}.c{display:flex;gap:3px;align-items:center}`,
`<div class="m">そこまでﾌﾟﾙするための基準を選択します</div><div class="e"></div><div class="i">${only('rec','記録')}<button class="c" aria-label="エラー">${ic('err')}${ic('up')}</button></div><div class="f">面</div><div class="o">1 面</div><div class="k">${only('upd','選択順')}${only('sback','選択を戻す')}<button class="c" aria-label="選択">${ic('scur')}${ic('up')}</button><button class="c" aria-label="範囲選択">${ic('sbox')}${ic('up')}</button><span></span><button class="c" aria-label="スピン">${ic('sspin')}${ic('up')}</button>${only('span','パン')}<button class="c" aria-label="ズーム">${ic('szoom')}${ic('up')}</button>${only('sdl','前のビュー')}${only('sur','次のビュー')}</div>`);

define('ds-app',`:host{display:flex;flex-direction:column;height:100vh}.main{display:flex;flex:1;min-height:0}aside{width:244px;display:flex;flex-direction:column;background:#fff;border-left:1px solid var(--pale)}
.a{flex:247}.b{flex:246}.c{flex:350}.v{flex:1;display:flex;flex-direction:column;padding-top:4px;min-width:0;background:var(--pale)}.v ds-view{margin-right:3px}
.q{width:29px;background:var(--face);display:flex;align-items:flex-start;padding-top:4px}.q button{writing-mode:vertical-rl;text-orientation:sideways;background:var(--pale);padding:4px 2px;height:62px;width:20px}.q i{width:7px;height:62px;background:#c8c8c8}`,
`<ds-title></ds-title><ds-tabs></ds-tabs><ds-ribbon></ds-ribbon><div class="main"><aside><ds-panel class="a" label="ｽﾄﾗｸﾁｬｰ"><ds-tree></ds-tree></ds-panel><ds-panel class="b" label="ﾌﾟﾛﾊﾟﾃｨ" tabs="ﾌﾟﾛﾊﾟﾃｨ,ﾚｲﾔ"><ds-props></ds-props></ds-panel><ds-panel class="c" label="ｵﾌﾟｼｮﾝ - ﾌﾟﾙ" tabs="ｵﾌﾟｼｮﾝ - ﾌﾟﾙ,選択"><ds-options></ds-options></ds-panel></aside>
<div class="v"><ds-view></ds-view><ds-docs></ds-docs></div><div class="q"><button>ｸｲｯｸｶﾞｲﾄﾞ</button><i></i></div></div><ds-status></ds-status>`);
</script>
</body>
</html>
